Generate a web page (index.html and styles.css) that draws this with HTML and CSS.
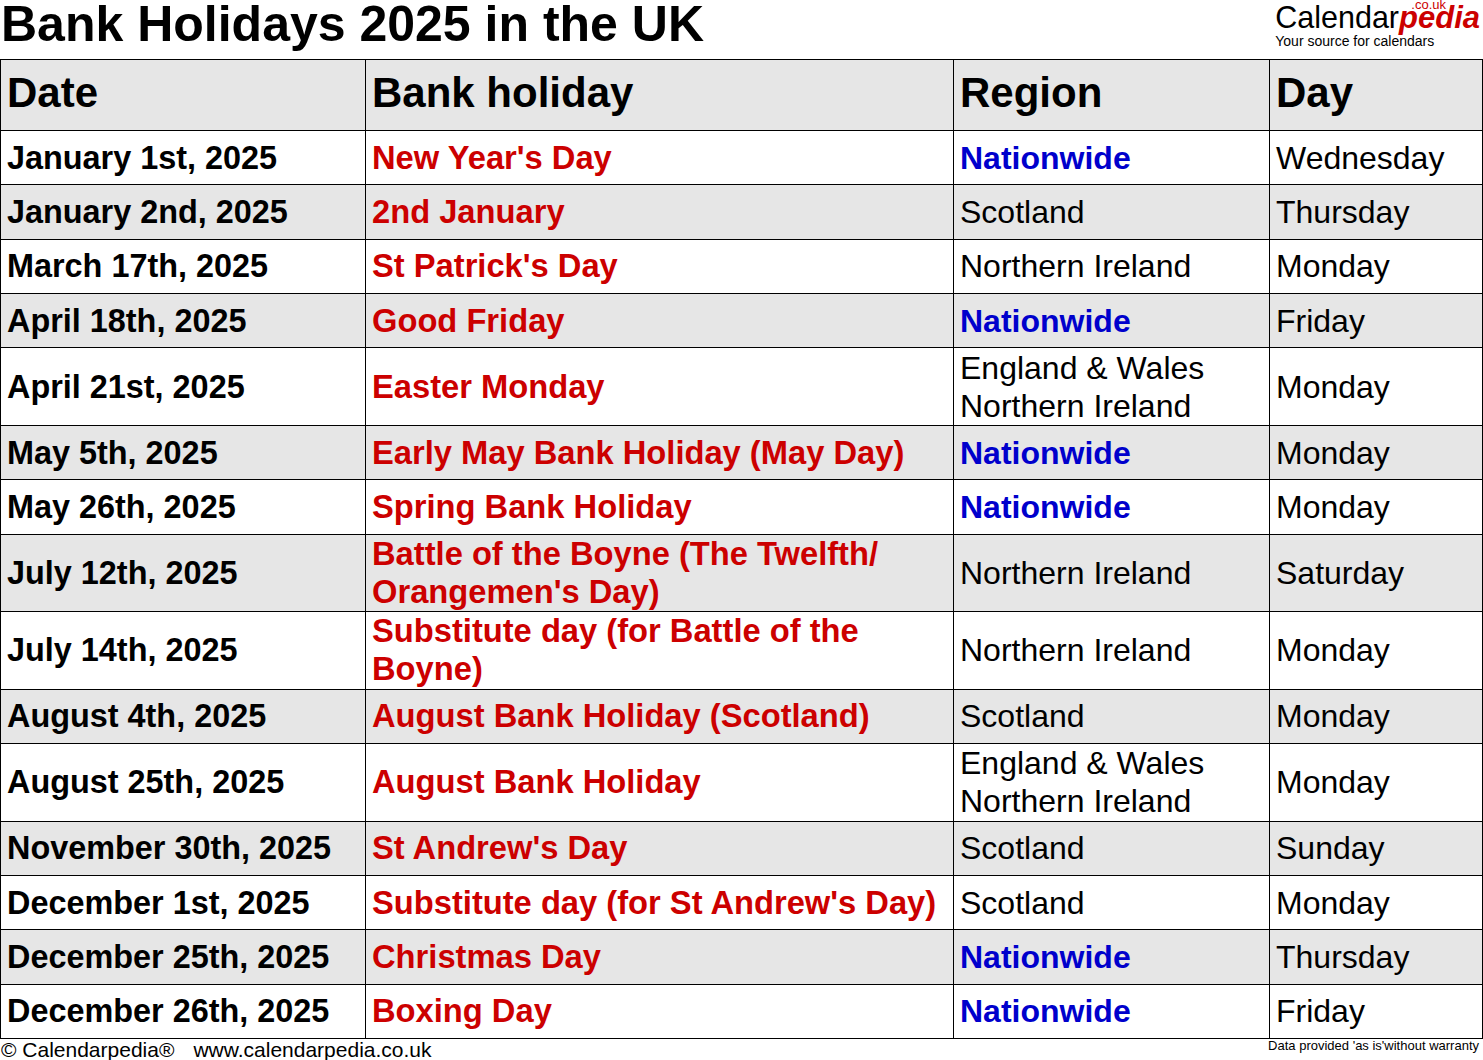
FILE: index.html
```html
<!DOCTYPE html>
<html lang="en">
<head>
<meta charset="utf-8">
<title>Bank Holidays 2025 in the UK</title>
<link rel="stylesheet" href="styles.css">
</head>
<body>
<header class="top">
  <h1 class="title">Bank Holidays 2025 in the UK</h1>
  <div class="logo">
    <div class="logo-main"><span class="cal">Calendar</span><span class="pedia">pedia</span><span class="couk">.co.uk</span></div>
    <div class="tag">Your source for calendars</div>
  </div>
</header>
<table class="hol">
  <colgroup>
    <col class="c-date"><col class="c-name"><col class="c-region"><col class="c-day">
  </colgroup>
  <thead>
    <tr><th>Date</th><th>Bank holiday</th><th>Region</th><th>Day</th></tr>
  </thead>
  <tbody>
    <tr><td class="date">January 1st, 2025</td><td class="name">New Year's Day</td><td class="nat">Nationwide</td><td>Wednesday</td></tr>
    <tr><td class="date">January 2nd, 2025</td><td class="name">2nd January</td><td>Scotland</td><td>Thursday</td></tr>
    <tr><td class="date">March 17th, 2025</td><td class="name">St Patrick's Day</td><td>Northern Ireland</td><td>Monday</td></tr>
    <tr><td class="date">April 18th, 2025</td><td class="name">Good Friday</td><td class="nat">Nationwide</td><td>Friday</td></tr>
    <tr class="dbl"><td class="date">April 21st, 2025</td><td class="name">Easter Monday</td><td>England &amp; Wales<br>Northern Ireland</td><td>Monday</td></tr>
    <tr><td class="date">May 5th, 2025</td><td class="name">Early May Bank Holiday (May Day)</td><td class="nat">Nationwide</td><td>Monday</td></tr>
    <tr><td class="date">May 26th, 2025</td><td class="name">Spring Bank Holiday</td><td class="nat">Nationwide</td><td>Monday</td></tr>
    <tr class="dbl"><td class="date">July 12th, 2025</td><td class="name">Battle of the Boyne (The Twelfth/<br>Orangemen's Day)</td><td>Northern Ireland</td><td>Saturday</td></tr>
    <tr class="dbl"><td class="date">July 14th, 2025</td><td class="name">Substitute day (for Battle of the<br>Boyne)</td><td>Northern Ireland</td><td>Monday</td></tr>
    <tr><td class="date">August 4th, 2025</td><td class="name">August Bank Holiday (Scotland)</td><td>Scotland</td><td>Monday</td></tr>
    <tr class="dbl"><td class="date">August 25th, 2025</td><td class="name">August Bank Holiday</td><td>England &amp; Wales<br>Northern Ireland</td><td>Monday</td></tr>
    <tr><td class="date">November 30th, 2025</td><td class="name">St Andrew's Day</td><td>Scotland</td><td>Sunday</td></tr>
    <tr><td class="date">December 1st, 2025</td><td class="name">Substitute day (for St Andrew's Day)</td><td>Scotland</td><td>Monday</td></tr>
    <tr><td class="date">December 25th, 2025</td><td class="name">Christmas Day</td><td class="nat">Nationwide</td><td>Thursday</td></tr>
    <tr><td class="date">December 26th, 2025</td><td class="name">Boxing Day</td><td class="nat">Nationwide</td><td>Friday</td></tr>
  </tbody>
</table>
<footer class="foot">
  <div class="copy"><span>© Calendarpedia®</span><span class="url">www.calendarpedia.co.uk</span></div>
  <div class="warranty">Data provided 'as is'without warranty</div>
</footer>
</body>
</html>
```

FILE: styles.css
```css
html, body {
  margin: 0;
  padding: 0;
  background: #ffffff;
  color: #000000;
  font-family: "Liberation Sans", Arial, sans-serif;
}
body {
  width: 1483px;
}
.top {
  display: flex;
  justify-content: space-between;
  align-items: flex-start;
  height: 59px;
}
.title {
  margin: 0 0 0 1px;
  font-size: 50px;
  line-height: 48px;
  font-weight: bold;
  white-space: nowrap;
}
.logo {
  margin-right: 3px;
  padding-top: 1px;
  display: flex;
  flex-direction: column;
}
.logo-main {
  position: relative;
  font-size: 30.5px;
  line-height: 32px;
  white-space: nowrap;
}
.cal {
  color: #000;
}
.pedia {
  color: #cc0000;
  font-weight: bold;
  font-style: italic;
  font-size: 31px;
}
.couk {
  position: absolute;
  right: 34px;
  top: -2px;
  font-size: 13px;
  line-height: 12px;
  color: #cc0000;
}
.tag {
  margin-left: 0;
  font-size: 14px;
  line-height: 14px;
  white-space: nowrap;
}
.hol {
  border-collapse: collapse;
  table-layout: fixed;
  width: 1482px;
}
.c-date { width: 365px; }
.c-name { width: 588px; }
.c-region { width: 316px; }
.c-day { width: 213px; }
.hol th, .hol td {
  border: 1px solid #000;
  padding: 0 0 0 6px;
  text-align: left;
  vertical-align: middle;
  white-space: nowrap;
  font-size: 32px;
  line-height: 38px;
  font-weight: normal;
}
.hol thead tr {
  height: 71px;
  background: #e6e6e6;
}
.hol th {
  font-size: 42px;
  line-height: 46px;
  font-weight: bold;
  padding-bottom: 4px;
}
.hol tbody tr {
  height: 54.36px;
}
.hol tbody tr.dbl {
  height: 77.5px;
}
.hol tbody tr:nth-child(even) {
  background: #e6e6e6;
}
.hol td.date {
  font-weight: bold;
  font-size: 32.4px;
}
.hol td.name {
  font-weight: bold;
  font-size: 32.7px;
  color: #cc0000;
}
.hol td.nat {
  font-weight: bold;
  color: #0000cc;
}
.foot {
  display: flex;
  justify-content: space-between;
  align-items: flex-start;
}
.copy {
  display: flex;
  gap: 19px;
  font-size: 21px;
  line-height: 22px;
  margin-left: 1px;
  white-space: nowrap;
}
.warranty {
  font-size: 13px;
  line-height: 14px;
  margin-right: 4px;
  white-space: nowrap;
}
```
